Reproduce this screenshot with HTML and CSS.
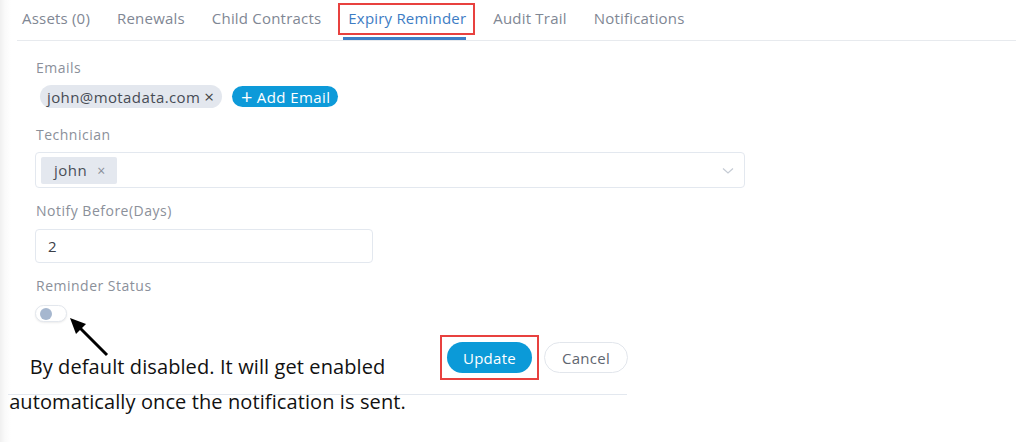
FILE: index.html
```html
<!DOCTYPE html>
<html>
<head>
<meta charset="utf-8">
<link rel="stylesheet" href="styles.css">
</head>
<body>
<div class="page">
  <nav class="tabs">
    <span class="tab">Assets (0)</span>
    <span class="tab">Renewals</span>
    <span class="tab">Child Contracts</span>
    <span class="tab tab-active">Expiry Reminder<span class="hl-box"></span></span>
    <span class="tab">Audit Trail</span>
    <span class="tab">Notifications</span>
  </nav>

  <form class="form">
    <div class="field">
      <label class="label">Emails</label>
      <div class="chips">
        <span class="chip-email">john@motadata.com <span class="x">×</span></span>
        <span class="btn-add"><span class="plus">+</span> Add Email</span>
      </div>
    </div>

    <div class="field">
      <label class="label">Technician</label>
      <div class="select">
        <span class="chip-tech">john <span class="x-small">×</span></span>
        <svg class="chev" width="12" height="8" viewBox="0 0 12 8"><path d="M1 1.5 L6 6 L11 1.5" fill="none" stroke="#c5cbd4" stroke-width="1.2"/></svg>
      </div>
    </div>

    <div class="field">
      <label class="label">Notify Before(Days)</label>
      <div class="input">2</div>
    </div>

    <div class="field">
      <label class="label">Reminder Status</label>
      <div class="toggle"><span class="knob"></span></div>
    </div>

    <div class="actions">
      <span class="hl-btn"><span class="btn-update">Update</span></span>
      <span class="btn-cancel">Cancel</span>
    </div>
    <div class="divider"></div>
  </form>

  <svg class="arrow" width="60" height="60" viewBox="0 0 60 60">
    <line x1="47" y1="45" x2="19" y2="17" stroke="#000" stroke-width="3"/>
    <polygon points="10,8 26,14 16,24" fill="#000"/>
  </svg>
  <div class="note">By default disabled. It will get enabled<br>automatically once the notification is sent.</div>
</div>
</body>
</html>
```

FILE: styles.css
```css
* { box-sizing: border-box; }
html, body { margin: 0; padding: 0; background: #fff; }
body {
  font-family: "Open Sans", "Liberation Sans", sans-serif;
  width: 1024px;
  height: 442px;
  overflow: hidden;
}
.page {
  position: relative;
  width: 1024px;
  height: 442px;
  background: linear-gradient(to right, #f0f0f0 0px, #fafafa 5px, #ffffff 11px);
}
.tabs {
  display: flex;
  align-items: flex-start;
  height: 41px;
  margin: 0 8px 0 17px;
  padding-left: 5px;
  border-bottom: 1px solid #e7eaee;
  gap: 27px;
}
.tab {
  font-size: 15px;
  letter-spacing: 0.2px;
  color: #7f8794;
  line-height: 36px;
  height: 40px;
  white-space: nowrap;
}
.tab-active {
  position: relative;
  color: #3d7cc4;
}
.tab-active::after {
  content: "";
  position: absolute;
  left: -5px;
  right: 0;
  bottom: 0;
  height: 3px;
  background: #3f7fc6;
}
.hl-box {
  position: absolute;
  left: -10px;
  right: -9px;
  top: 3px;
  height: 32px;
  border: 2px solid #e8413f;
  pointer-events: none;
}

.form {
  padding-left: 36px;
  margin: 0;
}
.field { display: block; }
.label {
  display: block;
  font-size: 14px;
  letter-spacing: 0.5px;
  color: #8b909a;
  line-height: 18px;
}
.field:nth-child(1) .label { margin-top: 18px; }
.chips {
  display: flex;
  align-items: center;
  gap: 10px;
  margin-top: 8px;
  margin-left: 4px;
}
.chip-email {
  display: inline-flex;
  align-items: center;
  height: 23px;
  padding: 0 8px 0 7px;
  border-radius: 12px;
  background: #e3e7ee;
  color: #474c55;
  font-size: 15px;
  letter-spacing: 0.4px;
}
.chip-email .x { margin-left: 4px; font-size: 17px; color: #444; letter-spacing: 0; }
.btn-add {
  display: inline-flex;
  align-items: center;
  height: 21px;
  padding: 0 8px 0 9px;
  border-radius: 11px;
  background: #0d9ad9;
  color: #fff;
  font-size: 15px;
  letter-spacing: 0.4px;
}
.btn-add .plus { font-size: 20px; margin-right: 4px; line-height: 1; }

.field:nth-child(2) .label { margin-top: 18px; }
.select {
  position: relative;
  display: flex;
  align-items: center;
  width: 710px;
  height: 36px;
  margin-left: -1px;
  margin-top: 8px;
  border: 1px solid #e3e8ef;
  border-radius: 4px;
  padding-left: 5px;
}
.chip-tech {
  display: inline-flex;
  align-items: center;
  height: 27px;
  padding: 0 11px 0 13px;
  background: #e4e8ef;
  border-radius: 2px;
  color: #4a4f58;
  font-size: 15px;
  letter-spacing: 0.5px;
}
.chip-tech .x-small { margin-left: 10px; font-size: 14px; color: #8a8f99; }
.chev { position: absolute; right: 10px; top: 14px; }

.field:nth-child(3) .label { margin-top: 14px; }
.input {
  width: 338px;
  height: 34px;
  margin-left: -1px;
  margin-top: 9px;
  border: 1px solid #e3e8ef;
  border-radius: 4px;
  padding-left: 12px;
  font-size: 15px;
  line-height: 32px;
  color: #3c4048;
}

.field:nth-child(4) .label { margin-top: 14px; }
.toggle {
  width: 32px;
  height: 17px;
  margin-left: -1px;
  margin-top: 10px;
  border: 1px solid #e3e7ed;
  border-radius: 9px;
  background: #fff;
  box-shadow: 0 1px 2px rgba(0,0,0,0.08);
  position: relative;
}
.knob {
  position: absolute;
  left: 4px;
  top: 2px;
  width: 12px;
  height: 12px;
  border-radius: 50%;
  background: #a6b7cf;
}

.actions {
  display: flex;
  align-items: center;
  gap: 12px;
  margin-left: 404px;
  margin-top: 13px;
}
.hl-btn {
  display: inline-block;
  padding: 5px;
  border: 2px solid #e8413f;
}
.btn-update {
  display: flex;
  align-items: center;
  justify-content: center;
  width: 85px;
  height: 31px;
  border-radius: 16px;
  background: #0b9ad8;
  color: #fff;
  font-size: 15px;
  letter-spacing: 0.3px;
}
.btn-cancel {
  display: flex;
  align-items: center;
  justify-content: center;
  width: 84px;
  height: 31px;
  border-radius: 16px;
  border: 1px solid #e2e6ec;
  color: #5f6670;
  font-size: 15px;
  letter-spacing: 0.3px;
  margin-left: -7px;
}
.divider {
  width: 619px;
  margin-left: -28px;
  margin-top: 14px;
  border-top: 1px solid #e3e8ef;
}

.arrow {
  position: absolute;
  left: 60px;
  top: 310px;
}
.note {
  position: absolute;
  left: 0;
  top: 349px;
  width: 415px;
  text-align: center;
  font-size: 20px;
  letter-spacing: 0.1px;
  line-height: 35px;
  color: #111;
}
```
